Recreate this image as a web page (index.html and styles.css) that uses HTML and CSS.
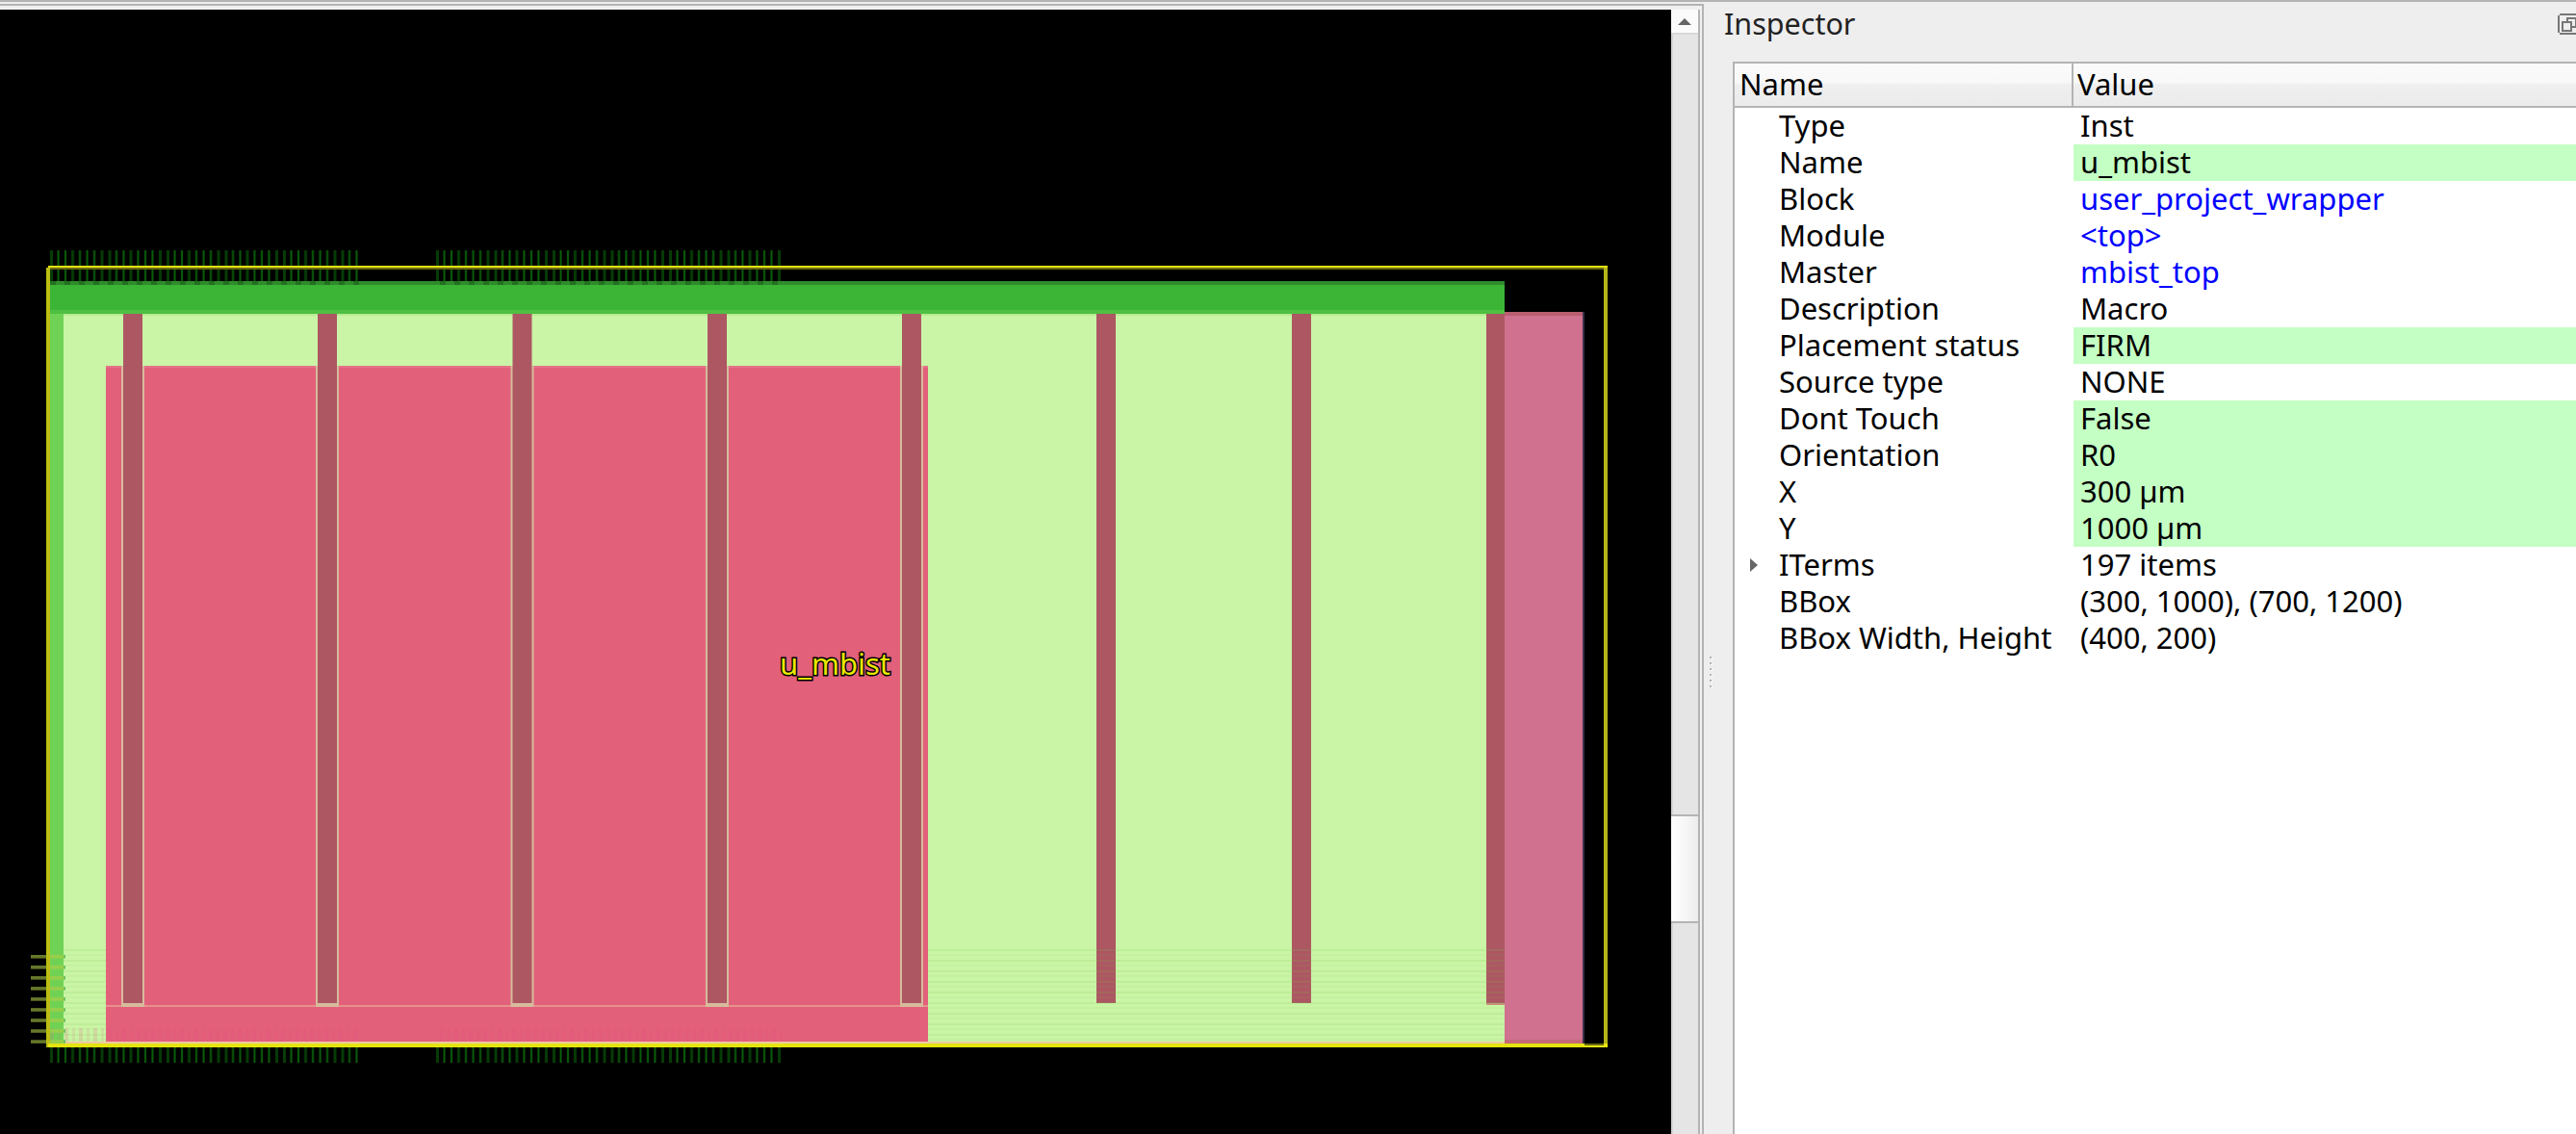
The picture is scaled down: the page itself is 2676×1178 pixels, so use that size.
FILE: index.html
```html
<!DOCTYPE html>
<html lang="en">
<head>
<meta charset="utf-8">
<title>Inspector</title>
<link rel="stylesheet" href="styles.css">
</head>
<body>
<div class="app">
  <div class="topline"></div>
  <div class="main">
    <div class="viewframe">
      <div class="viewinner">
        <svg class="layout" width="1736" height="1168" viewBox="0 10 1736 1168" xmlns="http://www.w3.org/2000/svg">
          <defs>
            <pattern id="pinsV" patternUnits="userSpaceOnUse" x="52" y="0" width="60.5" height="40">
              <rect x="0" width="3" height="40" fill="#063c06"/>
              <rect x="7.5" width="2" height="40" fill="#0a600a"/>
              <rect x="15" width="2" height="40" fill="#0a600a"/>
              <rect x="22" width="3" height="40" fill="#063c06"/>
              <rect x="30" width="2" height="40" fill="#0a600a"/>
              <rect x="37.5" width="2" height="40" fill="#0a600a"/>
              <rect x="45" width="2" height="40" fill="#0a600a"/>
              <rect x="52.5" width="3" height="40" fill="#063c06"/>
            </pattern>
            <pattern id="pinsW" patternUnits="userSpaceOnUse" x="453" y="0" width="60.5" height="40">
              <rect x="0" width="3" height="40" fill="#063c06"/>
              <rect x="7.5" width="2" height="40" fill="#0a600a"/>
              <rect x="15" width="2" height="40" fill="#0a600a"/>
              <rect x="22" width="3" height="40" fill="#063c06"/>
              <rect x="30" width="2" height="40" fill="#0a600a"/>
              <rect x="37.5" width="2" height="40" fill="#0a600a"/>
              <rect x="45" width="2" height="40" fill="#0a600a"/>
              <rect x="52.5" width="3" height="40" fill="#063c06"/>
            </pattern>
            <pattern id="pinsOver" patternUnits="userSpaceOnUse" x="52" y="0" width="15" height="40">
              <rect x="0" width="6" height="40" fill="#0a3f0a" fill-opacity=".35"/>
            </pattern>
            <pattern id="pinsL" patternUnits="userSpaceOnUse" x="32" y="992" width="36" height="11.04">
              <rect x="0" y="0" width="18" height="3.5" fill="#66792a"/>
              <rect x="18" y="0" width="16" height="3.5" fill="#98cf4a"/>
              <rect x="34" y="0" width="2" height="3.5" fill="#6cc060"/>
            </pattern>
            <pattern id="stripesH" patternUnits="userSpaceOnUse" x="0" y="985" width="20" height="11">
              <rect x="0" y="1" width="20" height="2" fill="#6fc83c" fill-opacity=".14"/>
              <rect x="0" y="6" width="20" height="2" fill="#6fc83c" fill-opacity=".07"/>
            </pattern>
            <pattern id="stripesV" patternUnits="userSpaceOnUse" x="52" y="0" width="15" height="40">
              <rect x="0" width="4" height="40" fill="#f04682" fill-opacity=".16"/>
              <rect x="8" width="3" height="40" fill="#f04682" fill-opacity=".1"/>
            </pattern>
          </defs>

          <rect x="52" y="260" width="321" height="35" fill="url(#pinsV)"/>
          <rect x="453" y="260" width="362" height="35" fill="url(#pinsW)"/>
          <rect x="52" y="1088" width="321" height="16" fill="url(#pinsV)"/>
          <rect x="453" y="1088" width="362" height="16" fill="url(#pinsW)"/>

          <rect x="66" y="326" width="1497" height="758" fill="#caf4a6"/>
          <rect x="66" y="326" width="1497" height="2" fill="#b7eb92"/>
          <rect x="52" y="292" width="14" height="792" fill="#70d255"/>
          <rect x="52" y="292" width="1511" height="4" fill="#2f8b2c"/>
          <rect x="52" y="296" width="1511" height="26" fill="#3cb435"/>
          <rect x="52" y="322" width="1511" height="4" fill="#4ebf41"/>
          <rect x="1563" y="324" width="81" height="760" fill="#cf718f"/>
          <rect x="1563" y="324" width="81" height="4" fill="#b95f70"/>
          <rect x="1644" y="324" width="2" height="760" fill="#3c3048"/>
          <rect x="110" y="380" width="854" height="704" fill="#e2607a"/>
          <rect x="110" y="380" width="854" height="2" fill="#e57388"/>
          <rect x="110" y="1044" width="854" height="2" fill="#e8908c"/>

          <rect x="126" y="380" width="24" height="666" fill="#d6bb9c"/>
          <rect x="328" y="380" width="24" height="666" fill="#d6bb9c"/>
          <rect x="530.5" y="380" width="24" height="666" fill="#d6bb9c"/>
          <rect x="733" y="380" width="24" height="666" fill="#d6bb9c"/>
          <rect x="935" y="380" width="24" height="666" fill="#d6bb9c"/>

          <rect x="128" y="326" width="20" height="716" fill="#ad5763"/>
          <rect x="330" y="326" width="20" height="716" fill="#ad5763"/>
          <rect x="532.5" y="326" width="20" height="716" fill="#ad5763"/>
          <rect x="735" y="326" width="20" height="716" fill="#ad5763"/>
          <rect x="937" y="326" width="20" height="716" fill="#ad5763"/>
          <rect x="1139" y="326" width="20" height="716" fill="#ad5763"/>
          <rect x="1342" y="326" width="20" height="716" fill="#ad5763"/>
          <rect x="1544" y="326" width="19" height="716" fill="#ad5763"/>
          <rect x="1544" y="1042" width="19" height="2" fill="#c8907c"/>

          <rect x="66" y="985" width="44" height="99" fill="url(#stripesH)"/>
          <rect x="964" y="985" width="599" height="99" fill="url(#stripesH)"/>
          <rect x="52" y="1068" width="321" height="16" fill="url(#stripesV)"/>
          <rect x="453" y="1068" width="362" height="16" fill="url(#stripesV)"/>
          <rect x="66" y="1082" width="1497" height="2" fill="#eccba0"/>
          <rect x="1563" y="1080" width="81" height="4" fill="#c76a78"/>

          <rect x="52" y="292" width="321" height="4" fill="url(#pinsOver)"/>
          <rect x="453" y="292" width="362" height="4" fill="url(#pinsOver)"/>
          <rect x="32" y="992" width="36" height="92" fill="url(#pinsL)"/>

          <rect x="50" y="278" width="1616" height="2" fill="#6b6b12"/>
          <rect x="48" y="278" width="4" height="810" fill="#bdbd14"/>
          <rect x="1666" y="276" width="4" height="812" fill="#b4b418"/>
          <rect x="50" y="276" width="1620" height="2" fill="#e2e214"/>
          <rect x="50" y="1084" width="1620" height="4" fill="#e4e410"/>
          <rect x="1646" y="1084" width="20" height="2" fill="#6b6b12"/>

          <text class="maplabel" x="810" y="701">u_mbist</text>
        </svg>
        <div class="vscroll">
          <div class="scrollbtn"><span class="uparrow"></span></div>
          <div class="track tracktop"></div>
          <div class="thumb"></div>
          <div class="track trackbottom"></div>
        </div>
      </div>
    </div>

    <div class="panel">
      <div class="paneltitle">
        <span>Inspector</span>
        <svg class="restore" width="21" height="22" viewBox="0 0 21 22" xmlns="http://www.w3.org/2000/svg">
          <path d="M2 1h17M1 2v18M2 21h17" fill="none" stroke="#777" stroke-width="2"/>
          <rect x="10" y="5" width="9" height="9" fill="none" stroke="#777" stroke-width="2"/>
          <rect x="5" y="9" width="9" height="9" fill="#eee" stroke="#777" stroke-width="2"/>
        </svg>
      </div>
      <div class="tree">
        <div class="head">
          <div class="hname">Name</div>
          <div class="hvalue">Value</div>
        </div>
        <div class="row"><div class="name">Type</div><div class="val">Inst</div></div>
        <div class="row"><div class="name">Name</div><div class="val edit">u_mbist</div></div>
        <div class="row"><div class="name">Block</div><div class="val link">user_project_wrapper</div></div>
        <div class="row"><div class="name">Module</div><div class="val link">&lt;top&gt;</div></div>
        <div class="row"><div class="name">Master</div><div class="val link">mbist_top</div></div>
        <div class="row"><div class="name">Description</div><div class="val">Macro</div></div>
        <div class="row"><div class="name">Placement status</div><div class="val edit">FIRM</div></div>
        <div class="row"><div class="name">Source type</div><div class="val">NONE</div></div>
        <div class="row"><div class="name">Dont Touch</div><div class="val edit">False</div></div>
        <div class="row"><div class="name">Orientation</div><div class="val edit">R0</div></div>
        <div class="row"><div class="name">X</div><div class="val edit">300 µm</div></div>
        <div class="row"><div class="name">Y</div><div class="val edit">1000 µm</div></div>
        <div class="row"><div class="name expandable">ITerms</div><div class="val">197 items</div></div>
        <div class="row"><div class="name">BBox</div><div class="val">(300, 1000), (700, 1200)</div></div>
        <div class="row"><div class="name">BBox Width, Height</div><div class="val">(400, 200)</div></div>
      </div>
      <div class="grip"><i></i><i></i><i></i><i></i><i></i><i></i></div>
    </div>
  </div>
</div>
</body>
</html>
```
FILE: styles.css
```css
* { box-sizing: border-box; }
html, body { margin: 0; height: 100%; overflow: hidden; background: #eeeeee; }
body { font-family: "Noto Sans", "Open Sans", sans-serif; color: #000; }

.app { display: flex; flex-direction: column; width: 2676px; height: 1178px; overflow: hidden; }
.topline { height: 2px; flex: none; background: #b4b4b4; }
.main { flex: 1; display: flex; min-height: 0; padding-top: 2px; }

.viewframe { flex: none; width: 1770px; border-top: 2px solid #b4b4b4; border-right: 2px solid #b4b4b4; padding: 4px 2px 0 0; background: #f0f0f0; }
.viewinner { display: flex; height: 100%; border-right: 2px solid #b4b4b4; }
.layout { flex: none; display: block; background: #000; }
.maplabel { font-family: "Noto Sans", sans-serif; font-size: 31px; fill: #e8e800; stroke: #000; stroke-width: 3px; paint-order: stroke; }

.vscroll { flex: none; width: 28px; display: flex; flex-direction: column; background: #e5e5e5; }
.scrollbtn { flex: none; height: 26px; background: #fbfbfb; border-bottom: 2px solid #d8d8d8; display: flex; align-items: center; justify-content: center; }
.uparrow { width: 0; height: 0; border-left: 7px solid transparent; border-right: 7px solid transparent; border-bottom: 7px solid #666; }
.track { border-left: 2px solid #d4d4d4; background: #e5e5e5; }
.tracktop { flex: none; height: 810px; }
.thumb { flex: none; height: 113px; border-top: 2px solid #b4b4b4; border-bottom: 2px solid #b4b4b4; background: linear-gradient(90deg, #ffffff, #f5f5f5 60%, #ececec); }
.trackbottom { flex: 1; }

.panel { flex: 1; min-width: 0; position: relative; background: #eeeeee; padding-left: 30px; display: flex; flex-direction: column; }
.paneltitle { flex: none; height: 60px; margin-left: -9px; display: flex; justify-content: space-between; font-size: 30.5px; line-height: 40px; color: #222; }
.restore { margin: 10px -2px 0 0; flex: none; }

.tree { flex: 1; background: #fff; border-top: 2px solid #b4b4b4; border-left: 2px solid #b4b4b4; }
.head { height: 46px; display: flex; border-bottom: 2px solid #b4b4b4; background: linear-gradient(#fbfbfb, #f8f8f8 45%, #efefef 50%, #ebebeb); font-size: 31px; line-height: 42px; }
.hname { flex: none; width: 352px; padding-left: 5px; border-right: 2px solid #b4b4b4; }
.hvalue { flex: 1; padding-left: 4px; }

.row { display: flex; height: 38px; font-size: 31px; line-height: 36px; white-space: nowrap; }
.name { flex: none; width: 352px; padding-left: 46px; position: relative; }
.val { flex: 1; padding-left: 7px; }
.edit { background: #c4ffc4; }
.link { color: #0000ff; }
.expandable::before { content: ""; position: absolute; left: 16px; top: 12px; width: 0; height: 0; border-top: 7px solid transparent; border-bottom: 7px solid transparent; border-left: 8px solid #666; }

.grip { position: absolute; left: 6px; top: 678px; display: flex; flex-direction: column; gap: 4px; }
.grip i { display: block; width: 2px; height: 2px; background: #b4b4b4; box-shadow: 1px 1px 0 #fbfbfb; }
```
